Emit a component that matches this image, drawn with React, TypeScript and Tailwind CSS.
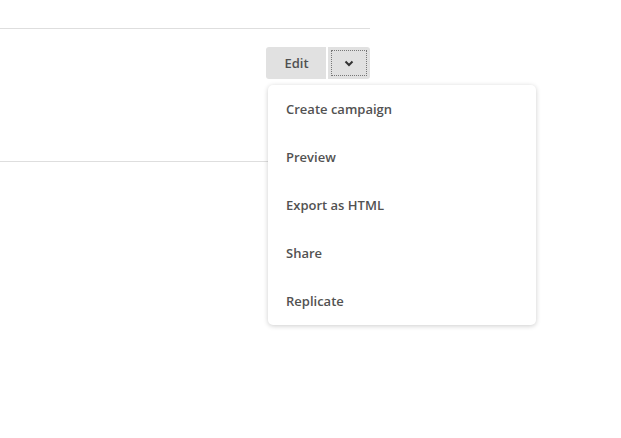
import React from "react";

const items = ["Create campaign", "Preview", "Export as HTML", "Share", "Replicate"];

export default function App() {
  return (
    <div
      className="w-[621px] h-[438px] bg-white"
      style={{ fontFamily: '"Open Sans", "Liberation Sans", sans-serif' }}
    >
      <div className="w-[370px]">
        <div className="h-[29px] border-b border-[#dedede]" />
        <div className="relative h-[133px] border-b border-[#dedede] pt-[18px]">
          <div className="flex justify-end">
            <button className="h-[32px] w-[60px] rounded-l-[3px] bg-[#e1e1e1] pt-[2px] pl-[1px] text-[13px] font-semibold text-[#505050]">
              Edit
            </button>
            <div className="w-[2px]" />
            <button className="flex h-[32px] w-[42px] items-center justify-center rounded-r-[3px] bg-[#e1e1e1] p-[3px]">
              <span className="flex h-full w-full items-center justify-center border border-dotted border-[#777]">
                <svg width="10" height="7" viewBox="0 0 10 7">
                  <path d="M1.5 1.5 L5 5 L8.5 1.5" fill="none" stroke="#333" strokeWidth="2" />
                </svg>
              </span>
            </button>
          </div>
          <div className="absolute left-[268px] top-[56px] z-10 w-[268px] rounded-[5px] bg-white shadow-[0_1px_5px_rgba(0,0,0,0.2)]">
            {items.map((t) => (
              <div
                key={t}
                className="flex h-[48px] items-center pl-[18px] pt-[2px] text-[13px] font-semibold text-[#525252]"
              >
                {t}
              </div>
            ))}
          </div>
        </div>
      </div>
    </div>
  );
}
